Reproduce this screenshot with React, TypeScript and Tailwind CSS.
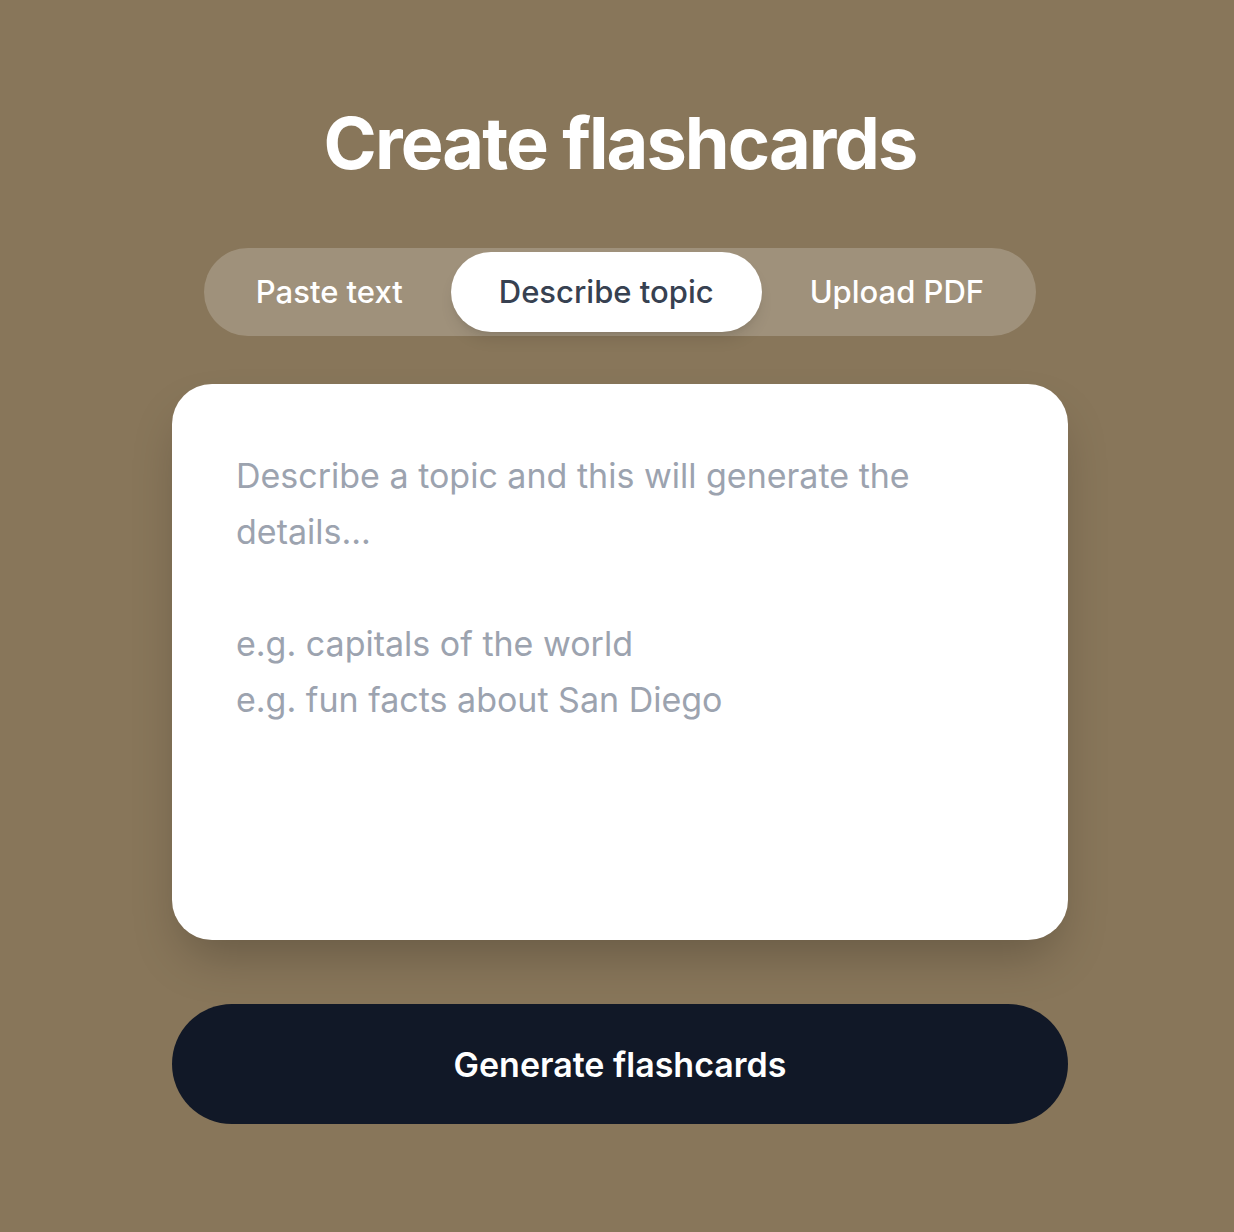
import React from "react";

export default function App() {
  const tabs = ["Paste text", "Describe topic", "Upload PDF"];
  const active = 1;
  return (
    <div
      className="min-h-[1232px] w-full bg-[#88765a] flex flex-col items-center pt-[103px] pl-[6px]"
      style={{ fontFamily: "Inter, 'Noto Sans', sans-serif" }}
    >
      <h1 className="text-[72px] leading-[80px] font-bold text-white tracking-[-1.9px]">
        Create flashcards
      </h1>
      <div className="mt-[65px] flex items-center rounded-full bg-white/20 p-1">
        {tabs.map((t, i) => (
          <button
            key={t}
            className={
              i === active
                ? "h-[80px] px-12 rounded-full bg-white text-[#374151] text-[31px] font-medium shadow-lg"
                : "h-[80px] px-12 rounded-full text-white text-[31px] font-medium"
            }
          >
            {t}
          </button>
        ))}
      </div>
      <div className="mt-12 w-[896px] h-[556px] rounded-[40px] bg-white shadow-2xl p-16">
        <div className="text-[34px] leading-[56px] text-[#9ca3af] whitespace-pre-line pr-[60px]">
          Describe a topic and this will generate the details...
          {"\n\n"}e.g. capitals of the world{"\n"}e.g. fun facts about San Diego
        </div>
      </div>
      <button className="mt-16 w-[896px] h-[120px] rounded-full bg-[#111827] text-white text-[34px] font-semibold">
        Generate flashcards
      </button>
    </div>
  );
}
